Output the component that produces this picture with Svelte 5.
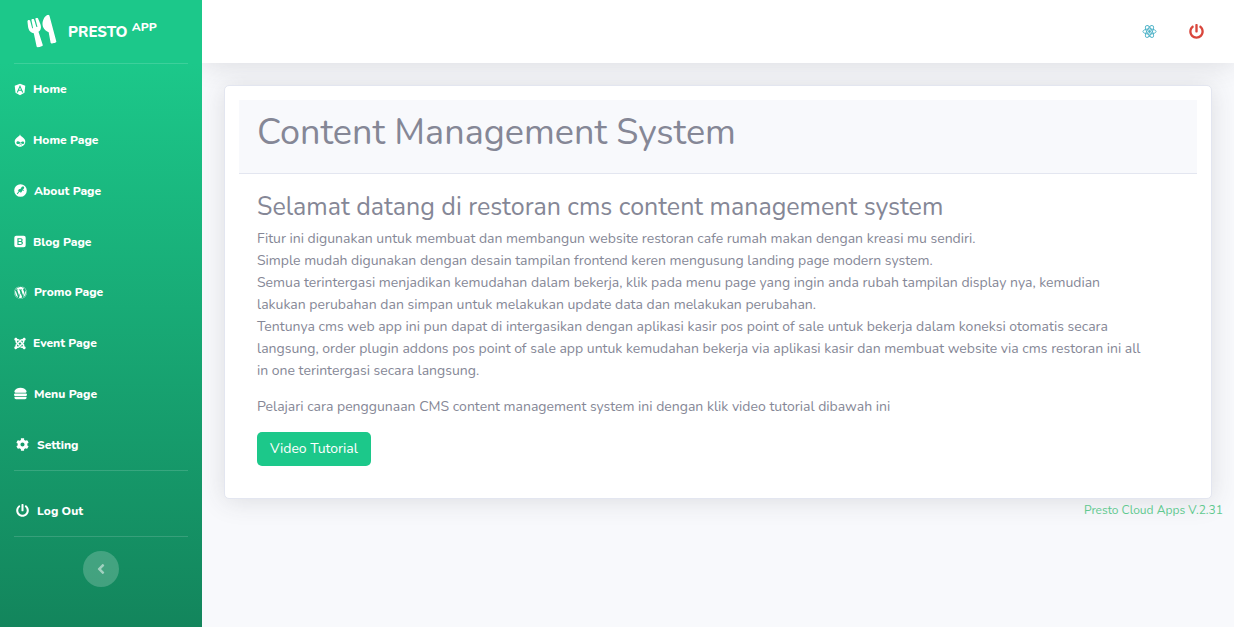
<script>
  const power =
    'M400 54.1c63 45 104 118.6 104 201.9 0 136.8-110.8 247.7-247.5 248C120 504.3 8.2 393 8 256.4 7.9 173.1 48.9 99.3 111.8 54.2c11.7-8.3 28-4.8 35 7.7L162.6 90c5.9 10.5 3.1 23.8-6.6 31-41.5 30.8-68 79.6-68 134.9-.1 92.3 74.5 168.1 168 168.1 91.6 0 168.6-74.2 168-169.1-.3-51.8-24.7-101.8-68.1-134-9.7-7.2-12.4-20.5-6.5-30.9l15.8-28.1c7-12.4 23.2-16.1 34.8-7.8zM296 264V24c0-13.3-10.7-24-24-24h-32c-13.3 0-24 10.7-24 24v240c0 13.3 10.7 24 24 24h32c13.3 0 24-10.7 24-24z';

  const items = [
    {
      label: 'Home',
      width: 448,
      path: 'M185.7 268.1h76.2l-38.1-91.6-38.1 91.6zM223.8 32L16 106.4l31.8 275.7 176 97.9 176-97.9 31.8-275.7zM354 373.8h-48.6l-26.2-65.4H168.6l-26.2 65.4H93.7L223.8 81.5z'
    },
    {
      label: 'Home Page',
      width: 448,
      path: 'M224 8C214 60 170 88 120 124C56 168 16 222 16 298C16 416 108 504 224 504S432 416 432 298C432 222 392 168 328 124C278 88 234 60 224 8zM146 290C190 290 220 322 246 340C276 320 306 296 346 296C382 296 392 326 386 352C378 384 352 394 328 390C294 384 272 362 250 362C222 362 190 398 144 398C104 398 82 376 82 346C82 312 108 290 146 290zM190 432C214 412 280 410 306 432L294 450C270 434 226 434 202 450z'
    },
    {
      label: 'About Page',
      width: 512,
      path: 'M256 8a248 248 0 1 0 0 496a248 248 0 1 0 0-496zM300 118L360 92L402 130L386 190L338 214L394 240L380 268L318 252L312 300L264 350L248 306L208 318L136 404L108 382L174 300L190 262L144 266L196 206L264 190z'
    },
    {
      label: 'Blog Page',
      width: 448,
      path: 'M292.3 311.93c0 42.41-39.72 41.43-43.92 41.43h-80.89v-81.69h80.89c42.56 0 43.92 31.9 43.92 40.26zm-50.15-73.13c.67 0 38.44 1 38.44-36.31 0-15.52-3.51-35.87-38.44-35.87h-74.66v72.18h74.66zM448 106.67v298.66A74.89 74.89 0 0 1 373.33 480H74.67A74.89 74.89 0 0 1 0 405.33V106.67A74.89 74.89 0 0 1 74.67 32h298.66A74.89 74.89 0 0 1 448 106.67zM338.05 317.86c0-21.57-6.65-58.29-49.05-67.35v-.73c22.91-9.78 37.34-28.25 37.34-55.64 0-7 2-64.78-77.6-64.78h-127v261.33c128.23 0 139.87 1.68 163.6-5.71 14.21-4.42 52.71-17.98 52.71-67.12z'
    },
    {
      label: 'Promo Page',
      width: 512,
      path: 'M61.7 169.4l101.5 278C92.2 413 43.3 340.2 43.3 256c0-30.9 6.6-60.1 18.4-86.6zm337.9 75.9c0-26.3-9.4-44.5-17.5-58.7-10.8-17.5-20.9-32.4-20.9-49.9 0-19.6 14.8-37.8 35.7-37.8.9 0 1.8.1 2.8.2-37.9-34.7-88.3-55.9-143.7-55.9-74.3 0-139.7 38.1-177.8 95.9 5 .2 9.7.3 13.7.3 22.2 0 56.7-2.7 56.7-2.7 11.5-.7 12.8 16.2 1.4 17.5 0 0-11.5 1.3-24.3 2l77.5 230.4L249.8 247l-33.1-90.8c-11.5-.7-22.3-2-22.3-2-11.5-.7-10.1-18.2 1.3-17.5 0 0 35.1 2.7 56 2.7 22.2 0 56.7-2.7 56.7-2.7 11.5-.7 12.8 16.2 1.4 17.5 0 0-11.5 1.3-24.3 2l76.9 228.7 21.2-70.9c9-29.4 16-50.5 16-68.7zm-139.9 29.3l-63.8 185.5c19.1 5.6 39.2 8.7 60.1 8.7 24.8 0 48.5-4.3 70.6-12.1-.6-.9-1.1-1.9-1.5-2.9l-65.4-179.2zm183-120.7c.9 6.8 1.4 14 1.4 21.9 0 21.6-4 45.8-16.2 76.2l-65 187.9C426.2 403 468.7 334.5 468.7 256c0-37-9.4-71.8-26-102.1zM504 256c0 136.8-111.3 248-248 248C119.2 504 8 392.7 8 256 8 119.2 119.2 8 256 8c136.7 0 248 111.2 248 248zm-11.4 0c0-130.5-106.2-236.6-236.6-236.6C125.5 19.4 19.4 125.5 19.4 256S125.6 492.6 256 492.6c130.5 0 236.6-106.1 236.6-236.6z'
    },
    {
      label: 'Event Page',
      width: 448,
      path: 'M.6 92.1C.6 58.8 27.4 32 60.4 32c30 0 54.5 21.9 59.2 50.2 32.6-7.6 67.1.6 96.5 30l-44.3 44.3c-20.5-20.5-42.6-16.3-55.4-3.5-14.3 14.3-14.3 37.9 0 52.2l99.5 99.5-44 44.3c-87.7-87.2-49.7-49.7-99.8-99.7-26.8-26.5-35-64.8-24.8-98.9C20.4 144.6.6 120.7.6 92.1zm129.5 116.4l44.3 44.3c10-10 89.7-89.7 99.7-99.8 14.3-14.3 37.6-14.3 51.9 0 12.8 12.8 17 35-3.5 55.4l44 44.3c31.2-31.2 38.5-67.6 28.9-101.2 29.2-4.1 51.9-29.2 51.9-59.5 0-33.2-26.8-60.1-59.8-60.1-30.3 0-55.4 22.5-59.5 51.6-33.8-9.9-71.7-1.5-98.3 25.1-18.3 19.1-71.1 71.5-99.6 99.9zm266.3 152.2c8.2-32.7-.9-68.5-26.3-93.9-11.8-12.2 5 4.7-99.5-99.7l-44.3 44.3 99.7 99.7c14.3 14.3 14.3 37.6 0 51.9-12.8 12.8-35 17-55.4-3.5l-44 44.3c27.6 30.2 68 38.8 102.7 28 5.5 27.4 29.7 48.1 58.9 48.1 33 0 59.8-26.8 59.8-60.1 0-30.2-22.5-55-51.6-59.1zm-84.3-53.1l-44-44.3c-87 86.4-50.4 50.4-99.7 99.8-14.3 14.3-37.6 14.3-51.9 0-13.1-13.4-16.9-35.3 3.2-55.4l-44-44.3c-30.2 30.2-38 65.2-29.5 98.3-26.7 6-46.2 29.9-46.2 58.2C0 453.2 26.8 480 59.8 480c28.6 0 52.5-19.8 58.6-46.7 32.7 8.2 68.5-.6 94.2-26 32.1-32 12.2-12.4 99.5-99.7z',
      rule: 'nonzero'
    },
    {
      label: 'Menu Page',
      width: 512,
      path: 'M464 256H48a48 48 0 0 0 0 96h416a48 48 0 0 0 0-96zm16 128H32a16 16 0 0 0-16 16v16a64 64 0 0 0 64 64h352a64 64 0 0 0 64-64v-16a16 16 0 0 0-16-16zM58.64 224h394.72c34.57 0 54.62-43.9 34.82-75.88C448 83.2 359.55 32.1 256 32c-103.54.1-192 51.2-232.18 116.11C4 180.09 24.07 224 58.64 224z'
    },
    {
      label: 'Setting',
      width: 512,
      fixed: true,
      path: 'M487.4 315.7l-42.6-24.6c4.3-23.2 4.3-47 0-70.2l42.6-24.6c4.9-2.8 7.1-8.6 5.5-14-11.1-35.6-30-67.8-54.7-94.6-3.8-4.1-10-5.1-14.8-2.3L380.8 110c-17.9-15.4-38.5-27.3-60.8-35.1V25.8c0-5.6-3.9-10.5-9.4-11.7-36.7-8.2-74.3-7.8-109.2 0-5.5 1.2-9.4 6.1-9.4 11.7V75c-22.2 7.9-42.8 19.8-60.8 35.1L88.7 85.5c-4.9-2.8-11-1.9-14.8 2.3-24.7 26.7-43.6 58.9-54.7 94.6-1.7 5.4.6 11.2 5.5 14L67.3 221c-4.3 23.2-4.3 47 0 70.2l-42.6 24.6c-4.9 2.8-7.1 8.6-5.5 14 11.1 35.6 30 67.8 54.7 94.6 3.8 4.1 10 5.1 14.8 2.3l42.6-24.6c17.9 15.4 38.5 27.3 60.8 35.1v49.2c0 5.6 3.9 10.5 9.4 11.7 36.7 8.2 74.3 7.8 109.2 0 5.5-1.2 9.4-6.1 9.4-11.7v-49.2c22.2-7.9 42.8-19.8 60.8-35.1l42.6 24.6c4.9 2.8 11 1.9 14.8-2.3 24.7-26.7 43.6-58.9 54.7-94.6 1.5-5.5-.7-11.3-5.6-14.1zM256 336c-44.1 0-80-35.9-80-80s35.9-80 80-80 80 35.9 80 80-35.9 80-80 80z'
    }
  ];
</script>

{#snippet navLink(item)}
  <a class="nav-link" href="#top">
    <span class="icon" class:fixed={item.fixed}>
      <svg viewBox="0 0 {item.width} 512" class:narrow={item.width === 448} aria-hidden="true">
        <path fill="currentColor" fill-rule={item.rule ?? 'evenodd'} d={item.path} />
      </svg>
    </span>
    <span>{item.label}</span>
  </a>
{/snippet}

<div class="wrapper" id="top">
  <aside class="sidebar">
    <a class="brand" href="#top">
      <svg viewBox="0 0 416 512" aria-hidden="true">
        <path fill="currentColor" d="M207.9 15.2c.8 4.7 16.1 94.5 16.1 128.8 0 52.3-27.8 89.6-68.9 104.6L168 486.7c.7 13.7-10.2 25.3-24 25.3H80c-13.7 0-24.7-11.5-24-25.3l12.9-238.1C27.7 233.6 0 196.2 0 144 0 109.6 15.3 19.9 16.1 15.2 19.3-5.1 61.4-5.4 64 16.3v141.2c1.3 3.4 15.1 3.2 16 0 1.4-25.3 7.9-139.2 8-141.8 3.3-20.8 44.7-20.8 47.9 0 .2 2.7 6.6 116.5 8 141.8.9 3.2 14.8 3.4 16 0V16.3c2.6-21.6 44.8-21.4 47.9-1.1zm119.2 285.7l-15 185.1c-1.2 14 9.9 26 23.9 26h56c13.3 0 24-10.7 24-24V24c0-13.2-10.7-24-24-24-82.5 0-221.4 178.5-64.9 300.9z" />
      </svg>
      <span>PRESTO <sup>APP</sup></span>
    </a>
    <hr />
    <nav>
      <ul>
        {#each items as item}
          <li>{@render navLink(item)}</li>
        {/each}
      </ul>
      <hr />
      <div class="logout">
        {@render navLink({ label: 'Log Out', width: 512, fixed: true, path: power })}
      </div>
      <hr />
    </nav>
    <button class="toggle" aria-label="Toggle sidebar">
      <svg viewBox="0 0 256 512" aria-hidden="true">
        <path fill="currentColor" d="M31.7 239l136-136c9.4-9.4 24.6-9.4 33.9 0l22.6 22.6c9.4 9.4 9.4 24.6 0 33.9L127.9 256l96.4 96.4c9.4 9.4 9.4 24.6 0 33.9L201.7 409c-9.4 9.4-24.6 9.4-33.9 0l-136-136c-9.5-9.4-9.5-24.6-.1-34z" />
      </svg>
    </button>
  </aside>

  <div class="content">
    <header class="topbar">
      <a class="react" href="#top" aria-label="Site">
        <svg viewBox="0 0 32 32" aria-hidden="true">
          <g fill="none" stroke="currentColor" stroke-width="2">
            <ellipse cx="16" cy="16" rx="14" ry="5.5" />
            <ellipse cx="16" cy="16" rx="14" ry="5.5" transform="rotate(60 16 16)" />
            <ellipse cx="16" cy="16" rx="14" ry="5.5" transform="rotate(120 16 16)" />
          </g>
          <circle cx="16" cy="16" r="3" fill="currentColor" />
        </svg>
      </a>
      <a class="power" href="#top" aria-label="Log out">
        <svg viewBox="0 0 512 512" aria-hidden="true"><path fill="currentColor" d={power} /></svg>
      </a>
    </header>

    <main>
      <section class="card">
        <div class="card-header"><h1>Content Management System</h1></div>
        <div class="card-body">
          <h2>Selamat datang di restoran cms content management system</h2>
          <p>
            Fitur ini digunakan untuk membuat dan membangun website restoran cafe rumah makan dengan kreasi mu sendiri.<br />
            Simple mudah digunakan dengan desain tampilan frontend keren mengusung landing page modern system.<br />
            Semua terintergasi menjadikan kemudahan dalam bekerja, klik pada menu page yang ingin anda rubah tampilan display nya, kemudian lakukan perubahan dan simpan untuk melakukan update data dan melakukan perubahan.<br />
            Tentunya cms web app ini pun dapat di intergasikan dengan aplikasi kasir pos point of sale untuk bekerja dalam koneksi otomatis secara langsung, order plugin addons pos point of sale app untuk kemudahan bekerja via aplikasi kasir dan membuat website via cms restoran ini all in one terintergasi secara langsung.
          </p>
          <p>Pelajari cara penggunaan CMS content management system ini dengan klik video tutorial dibawah ini</p>
          <button class="video">Video Tutorial</button>
        </div>
      </section>
    </main>
    <footer>Presto Cloud Apps V.2.31</footer>
  </div>
</div>

<style>
  :global(body) {
    margin: 0;
    background: #f8f9fc;
  }
  .wrapper {
    display: flex;
    min-height: 100vh;
    font-family: Nunito, Lato, sans-serif;
    font-size: 14px;
    line-height: 22px;
    color: #858796;
  }
  svg {
    display: block;
  }
  a {
    color: inherit;
    text-decoration: none;
  }
  .sidebar {
    position: relative;
    z-index: 1;
    box-sizing: border-box;
    flex: 0 0 202px;
    display: flex;
    flex-direction: column;
    color: #fff;
    background: linear-gradient(180deg, #1cc88a 10%, #13855c 100%);
  }
  .brand {
    display: flex;
    align-items: center;
    gap: 14px;
    height: 63px;
    padding-left: 29px;
    font-size: 15px;
    font-weight: 800;
  }
  .brand svg {
    width: 25px;
    height: 29px;
    transform: rotate(-15deg);
  }
  sup {
    font-size: 12px;
    line-height: 0;
  }
  hr {
    height: 1px;
    margin: 0 14px;
    border: 0;
    background: rgba(255, 255, 255, 0.15);
  }
  ul {
    display: grid;
    grid-auto-rows: 1fr;
    height: 406px;
    margin: 0;
    padding: 0;
    list-style: none;
  }
  .nav-link {
    display: flex;
    align-items: center;
    gap: 7px;
    height: 100%;
    padding-left: 14px;
    font-size: 12px;
    font-weight: 800;
  }
  .nav-link svg {
    width: 13px;
    height: 13px;
  }
  .nav-link svg.narrow {
    width: 12px;
  }
  .icon.fixed {
    padding: 0 1px 0 2px;
  }
  .logout {
    height: 51px;
    padding-top: 14px;
  }
  .toggle {
    display: grid;
    place-items: center;
    align-self: center;
    width: 36px;
    height: 36px;
    margin: 14px 0;
    padding: 0;
    border: 0;
    border-radius: 50%;
    color: rgba(255, 255, 255, 0.5);
    background: rgba(255, 255, 255, 0.2);
  }
  .toggle svg {
    width: 8px;
    height: 16px;
  }
  .content {
    flex: 1;
    min-width: 0;
  }
  .topbar {
    display: flex;
    justify-content: flex-end;
    align-items: center;
    gap: 32px;
    height: 63px;
    padding-right: 30px;
    background: #fff;
    box-shadow: 0 2px 26px rgba(58, 59, 69, 0.15);
  }
  .topbar svg {
    width: 15px;
    height: 15px;
  }
  .react {
    color: #4fb3c8;
  }
  .power {
    color: #d9463c;
  }
  main {
    padding: 22px 22px 0;
  }
  .card {
    padding: 14px;
    border: 1px solid #e3e6f0;
    border-radius: 5px;
    background: #fff;
    box-shadow: 0 2px 26px rgba(58, 59, 69, 0.15);
  }
  .card-header {
    padding: 11px 18px 18px;
    border-bottom: 1px solid #e3e6f0;
    background: #f8f9fc;
  }
  h1,
  h2 {
    margin: 0;
    font-weight: 400;
  }
  h1 {
    font-size: 36px;
    line-height: 44px;
  }
  .card-body {
    padding: 18px;
  }
  h2 {
    margin-bottom: 6px;
    font-size: 25px;
    line-height: 30px;
  }
  p {
    margin: 0 0 14px;
    padding-right: 32px;
  }
  .video {
    display: block;
    height: 34px;
    padding: 0 13px;
    border: 0;
    border-radius: 5px;
    font: inherit;
    color: #fff;
    background: #1cc88a;
  }
  footer {
    padding-right: 11px;
    font-size: 12px;
    text-align: right;
    color: #5fc98f;
  }
</style>
